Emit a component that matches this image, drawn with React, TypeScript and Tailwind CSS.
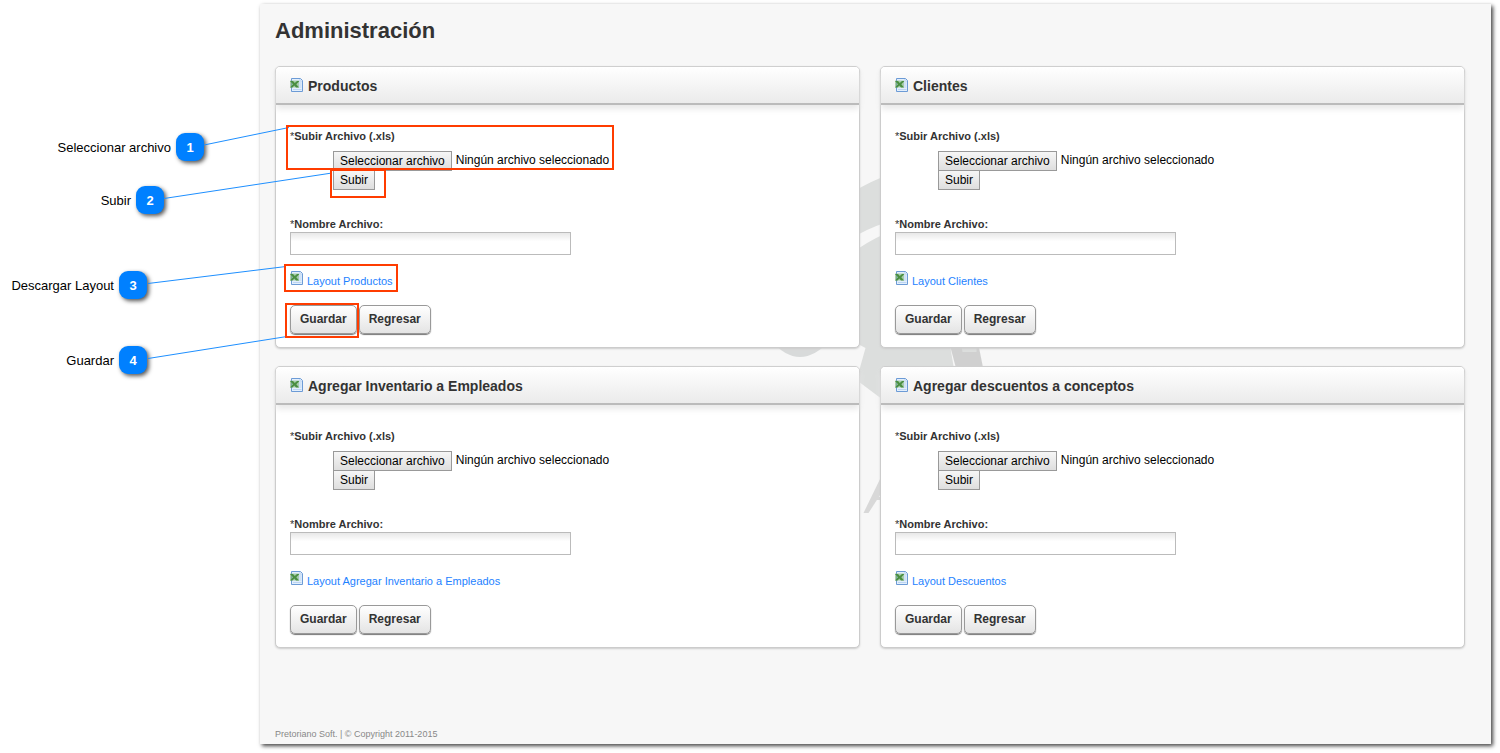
import type { ReactNode } from "react";
import clsx from "clsx";

interface ISection {
  id: string;
  title: string;
  layout: string;
  annotated?: boolean;
}

const sections: ISection[] = [
  { id: "productos", title: "Productos", layout: "Layout Productos", annotated: true },
  { id: "clientes", title: "Clientes", layout: "Layout Clientes" },
  { id: "inventario", title: "Agregar Inventario a Empleados", layout: "Layout Agregar Inventario a Empleados" },
  { id: "descuentos", title: "Agregar descuentos a conceptos", layout: "Layout Descuentos" },
];

const callouts = [
  { number: 1, text: "Seleccionar archivo", place: "top-[133px] right-14" },
  { number: 2, text: "Subir", place: "top-[186px] right-24" },
  { number: 3, text: "Descargar Layout", place: "top-[271px] right-[113px]" },
  { number: 4, text: "Guardar", place: "top-[346px] right-[113px]" },
];

const ExcelIcon = () => (
  <svg viewBox="0 0 14 14" className="h-3.5 w-3.5 shrink-0" aria-hidden="true">
    <path d="M1.500 .5H10.500L12.500 2.500V13.500H1.500z" fill="#e3effc" stroke="#6c9bd6" />
    <path d="M10 1V3h2" fill="#fff" stroke="#a9c8ee" strokeWidth=".8" />
    <path d="M9 5h2.500M9 7h2.500M9 9h2.500M3 11.500h8.500" stroke="#bcd5f2" />
    <path d="M0 2.500h9v7H0z" fill="#7fb27a" opacity=".6" />
    <path d="M0 3h3l1.800 2L7 3h2.500L6.300 6.200 9 9.500H6L4.300 7.600 2.500 9.500H0l3-3.300z" fill="#4a8f42" />
  </svg>
);

const Highlight = ({ className }: { className: string }) => (
  <span className={clsx("pointer-events-none absolute z-10 border-2 border-[#ff3c00]", className)} />
);

const ActionButton = ({ children }: { children: ReactNode }) => (
  <button
    type="button"
    className="h-[29px] rounded-[5px] border border-[#999] bg-linear-to-b from-white to-[#e4e4e4] px-[9px] pb-0.5 text-[12px] leading-[16px] font-bold text-[#333] shadow-[0_1px_1px_#777]"
  >
    {children}
  </button>
);

const Watermark = () => (
  <svg
    viewBox="760 160 231 370"
    className="pointer-events-none absolute top-[156px] left-1/2 h-[370px] w-[231px] -translate-x-1/2"
    aria-hidden="true"
  >
    <path d="M840 200Q860 186 882 177L930 175V240L950 348L962 420H905L880 398L856 380L865 348L850 340V243z" fill="#dcdedd" />
    <path d="M850 239Q866 229 884 223V234Q868 241 850 254z" fill="#f7f7f7" />
    <path d="M770 340Q799 374 830 340z" fill="#d8dada" />
    <path d="M948 340H977L983 370H956z" fill="#d0d0d0" />
    <path d="M961 346H976V352H962z" fill="#dcdedd" />
    <path d="M863 513L882 474H888V482L868 513z" fill="#d8d8d8" />
    <path d="M873 497H888V500H872z" fill="#d8d8d8" />
  </svg>
);

const Section = ({ section }: { section: ISection }) => {
  const { id, title, layout, annotated } = section;

  return (
    <section className="rounded-[5px] border border-[#ccc] bg-white shadow-[0_1px_2px_#ccc]">
      <header className="flex h-[38px] items-center gap-1 rounded-t-[4px] border-b-2 border-[#bbb] bg-linear-to-b from-white to-[#ebebeb] px-3.5 shadow-[0_4px_6px_#e8e8e8]">
        <ExcelIcon />
        <h2 className="pt-0.5 text-[14px] leading-[18px] font-bold text-[#333]">{title}</h2>
      </header>

      <form className="flex flex-col items-start px-3.5 pt-6 pb-[13px]">
        <div className="relative">
          <label htmlFor={`${id}-file`} className="block text-[11px] leading-[14px] font-bold text-[#333]">
            <span className="font-normal">*</span>Subir Archivo (.xls)
          </label>
          <div className="mt-2 flex items-start gap-1 pl-[43px] text-[12px] text-black">
            <input id={`${id}-file`} type="file" className="sr-only" />
            <label
              htmlFor={`${id}-file`}
              className="h-5 border border-[#999] bg-linear-to-b from-[#f6f6f6] to-[#dedede] px-1.5 leading-[18px]"
            >
              Seleccionar archivo
            </label>
            <span className="leading-[18px]">Ningún archivo seleccionado</span>
          </div>
          {annotated && <Highlight className="-top-1 -right-[5px] bottom-px -left-1" />}
        </div>

        <div className="relative -mt-px ml-[43px] flex">
          <button
            type="button"
            className="h-5 border border-[#999] bg-linear-to-b from-[#f6f6f6] to-[#dedede] px-1.5 text-[12px] leading-[18px] text-black"
          >
            Subir
          </button>
          {annotated && <Highlight className="-top-px -right-[11px] -bottom-2 -left-[3px]" />}
        </div>

        <label htmlFor={`${id}-name`} className="mt-[27px] text-[11px] leading-[14px] font-bold text-[#333]">
          <span className="font-normal">*</span>Nombre Archivo:
        </label>
        <input
          id={`${id}-name`}
          type="text"
          className="mt-px h-[23px] w-[281px] border border-[#bbb] bg-linear-to-b from-[#e8e8e8] to-white to-40% px-1 text-[12px]"
        />

        <div className="relative mt-4">
          <a href={`#${id}`} className="flex gap-[3px] text-[11px] leading-[14px] text-[#1e82ff]">
            <ExcelIcon />
            <span className="pt-[3px]">{layout}</span>
          </a>
          {annotated && <Highlight className="-top-[7px] -right-[5px] -bottom-1 -left-1.5" />}
        </div>

        <div className="mt-[17px] flex gap-0.5">
          <div className="relative flex">
            <ActionButton>Guardar</ActionButton>
            {annotated && <Highlight className="-top-0.5 -right-0.5 -bottom-1 -left-[5px]" />}
          </div>
          <ActionButton>Regresar</ActionButton>
        </div>
      </form>
    </section>
  );
};

export default function App() {
  return (
    <div className="relative flex min-h-screen bg-white pt-1 pr-[9px] pb-[9px] font-['Liberation_Sans',Arial,sans-serif]">
      <aside className="w-[260px] shrink-0">
        <div className="absolute top-0 left-0 w-[260px]">
          {callouts.map((callout) => (
            <div key={callout.number} className={clsx("absolute flex items-center gap-[5px]", callout.place)}>
              <span className="pt-0.5 text-[13px] leading-[16px] whitespace-nowrap text-black">{callout.text}</span>
              <span className="flex h-7 w-7 items-center justify-center rounded-[9px] bg-[#0080ff] pt-0.5 text-[13px] leading-[16px] font-bold text-white shadow-[2px_2px_4px_#555]">
                {callout.number}
              </span>
            </div>
          ))}
        </div>
      </aside>

      <main className="relative flex min-w-0 flex-1 flex-col bg-[#f7f7f7] pr-[26px] pl-[15px] shadow-[2px_2px_4px_#444]">
        <Watermark />
        <h1 className="pt-3.5 pb-[22px] text-[22px] leading-[26px] font-bold text-[#333]">Administración</h1>
        <div className="relative grid grid-cols-2 gap-x-5 gap-y-[18px]">
          {sections.map((section) => (
            <Section key={section.id} section={section} />
          ))}
        </div>
        <footer className="mt-auto pb-1 text-[9px] leading-[12px] text-[#888]">
          Pretoriano Soft. | © Copyright 2011-2015
        </footer>
      </main>

      {/* leader lines from the numbers to the highlighted controls */}
      <svg
        viewBox="0 0 340 400"
        className="pointer-events-none absolute top-0 left-0 h-[400px] w-[340px]"
        fill="none"
        stroke="#1e8fff"
        aria-hidden="true"
      >
        <path d="M204 145L289 127.500M164 198.500L332 173M148 283.500L286 266.500M148 358.500L287 336.500" />
      </svg>
    </div>
  );
}
